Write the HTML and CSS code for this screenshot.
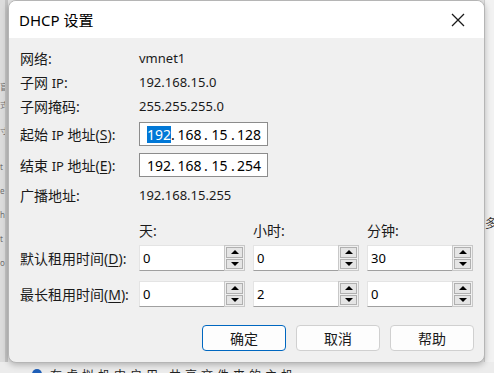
FILE: index.html
```html
<!doctype html>
<html>
<head>
<meta charset="utf-8">
<title>DHCP 设置</title>
<link rel="stylesheet" href="styles.css">
</head>
<body>
<div class="desk">
    <div class="left_strip">
        <span class="lc" style="top:82px">盲</span>
        <span class="lc" style="top:100px">式</span>
        <span class="lc" style="top:126px">寸</span>
        <span class="lc" style="top:162px">t</span>
        <span class="lc" style="top:186px">e</span>
        <span class="lc" style="top:210px">h</span>
        <span class="lc" style="top:234px">t</span>
        <span class="lc" style="top:258px">o</span>
    </div>
    <div class="right_strip">
        <span class="rc">多|</span>
    </div>
    <div class="bottom_strip">
        <span class="dot_blue"></span>
        <span class="btm_text">在虚拟机中启用 共享文件夹的主机</span>
    </div>

    <div class="dialog">
        <div class="titlebar">
            <span class="title">DHCP 设置</span>
            <svg class="close" width="14" height="14" viewBox="0 0 14 14">
                <path d="M1 1 L13 13 M13 1 L1 13" stroke="#1a1a1a" stroke-width="1.3" fill="none"/>
            </svg>
        </div>
        <div class="body">
            <div class="row r_info first">
                <span class="lbl">网络:</span><span class="val">vmnet1</span>
            </div>
            <div class="row r_info">
                <span class="lbl">子网 <span class="lat">IP</span>:</span><span class="val">192.168.15.0</span>
            </div>
            <div class="row r_info">
                <span class="lbl">子网掩码:</span><span class="val">255.255.255.0</span>
            </div>
            <div class="row r_ip r_start">
                <span class="lbl">起始 <span class="lat">IP</span> 地址(<u>S</u>):</span>
                <div class="ipbox">
                    <span class="oct o1"><span class="sel">192</span><span class="caret"></span></span><span class="dt">.</span><span class="oct">168</span><span class="dt">.</span><span class="oct o3">15</span><span class="dt">.</span><span class="oct">128</span>
                </div>
            </div>
            <div class="row r_ip r_end">
                <span class="lbl">结束 <span class="lat">IP</span> 地址(<u>E</u>):</span>
                <div class="ipbox">
                    <span class="oct o1">192</span><span class="dt">.</span><span class="oct">168</span><span class="dt">.</span><span class="oct o3">15</span><span class="dt">.</span><span class="oct">254</span>
                </div>
            </div>
            <div class="row r_bcast">
                <span class="lbl">广播地址:</span><span class="val">192.168.15.255</span>
            </div>
            <div class="row r_heads">
                <span class="lbl"></span>
                <span class="head">天:</span><span class="head">小时:</span><span class="head">分钟:</span>
            </div>
            <div class="row r_spin r_def">
                <span class="lbl">默认租用时间(<u>D</u>):</span>
                <div class="spin"><div class="sfield">0</div><div class="sbtns"><div class="sb"><span class="up"></span></div><div class="sb"><span class="down"></span></div></div></div>
                <div class="spin"><div class="sfield">0</div><div class="sbtns"><div class="sb"><span class="up"></span></div><div class="sb"><span class="down"></span></div></div></div>
                <div class="spin"><div class="sfield">30</div><div class="sbtns"><div class="sb"><span class="up"></span></div><div class="sb"><span class="down"></span></div></div></div>
            </div>
            <div class="row r_spin r_max">
                <span class="lbl">最长租用时间(<u>M</u>):</span>
                <div class="spin"><div class="sfield">0</div><div class="sbtns"><div class="sb"><span class="up"></span></div><div class="sb"><span class="down"></span></div></div></div>
                <div class="spin"><div class="sfield">2</div><div class="sbtns"><div class="sb"><span class="up"></span></div><div class="sb"><span class="down"></span></div></div></div>
                <div class="spin"><div class="sfield">0</div><div class="sbtns"><div class="sb"><span class="up"></span></div><div class="sb"><span class="down"></span></div></div></div>
            </div>
            <div class="buttons">
                <button class="btn btn_ok">确定</button>
                <button class="btn">取消</button>
                <button class="btn">帮助</button>
            </div>
        </div>
    </div>
</div>
</body>
</html>
```

FILE: styles.css
```css
* {margin: 0; padding: 0; box-sizing: border-box;}
html, body {
  width: 494px;
  height: 373px;
  overflow: hidden;
}
body {
  font-family: "Noto Sans", "Noto Sans CJK SC", sans-serif;
  font-size: 13px;
  color: #1a1a1a;
  background: #e6e6e6;
}
.desk {
  position: relative;
  width: 494px;
  height: 373px;
}
.left_strip {
  position: absolute;
  left: 0; top: 0;
  width: 8px;
  height: 373px;
  background: #dcdcdc;
  border-right: 3px solid #c4c4c4;
  overflow: hidden;
}
.lc {
  position: absolute;
  left: 0;
  font-size: 8px;
  line-height: 10px;
  color: #707070;
}
.right_strip {
  position: absolute;
  right: 0; top: 0;
  width: 10px;
  height: 373px;
  background: #f2f2f2;
  border-left: 1px solid #d0d0d0;
  overflow: hidden;
}
.rc {
  position: absolute;
  top: 214px;
  left: 0;
  font-size: 12px;
  color: #333;
  white-space: nowrap;
}
.bottom_strip {
  position: absolute;
  left: 0; top: 362px;
  width: 494px;
  height: 11px;
  background: #ececec;
  overflow: hidden;
}
.dot_blue {
  position: absolute;
  left: 32px; top: 7px;
  width: 10px; height: 10px;
  border-radius: 50%;
  background: #1f5fb8;
}
.btm_text {
  position: absolute;
  left: 50px; top: 4px;
  font-size: 12px;
  letter-spacing: 4px;
  color: #222;
  white-space: nowrap;
}
.dialog {
  position: absolute;
  left: 8px; top: 0;
  width: 477px;
  height: 363px;
  background: #f0f0f0;
  border: 1px solid #b5b5b5;
  border-radius: 8px;
  box-shadow: 0 2px 6px rgba(0,0,0,0.25);
  overflow: hidden;
  display: flex;
  flex-direction: column;
}
.titlebar {
  height: 37px;
  background: #fff;
  display: flex;
  align-items: center;
  justify-content: space-between;
  padding: 0 19px 0 10px;
  flex-shrink: 0;
}
.title {
  font-size: 15px;
  color: #000;
}
.close {display: block;}
.body {
  padding: 8px 0 0 11px;
}
.row {
  display: flex;
  align-items: center;
}
.lbl {
  width: 119px;
  flex-shrink: 0;
  white-space: nowrap;
  font-size: 14px;
}
.lbl u {text-underline-offset: 2px;}
.lat {font-size: 13px;}
.val {font-size: 13px;}
.r_info {height: 24px;}
.r_start {margin-top: 4px; height: 24px;}
.r_end {margin-top: 7px; height: 24px;}
.r_bcast {margin-top: 6px; height: 24px;}
.r_heads {margin-top: 11px; height: 24px;}
.r_def {margin-top: 3px; height: 26px;}
.r_max {margin-top: 10px; height: 26px;}
.ipbox {
  width: 129px;
  height: 24px;
  background: #fff;
  border: 1px solid #8c8c8c;
  display: flex;
  align-items: center;
  padding-left: 7px;
  font-size: 14px;
  color: #000;
}
.oct {display: inline-block; text-align: center;}
.o1 {width: 22px; display: inline-flex; align-items: center;}
.oct:nth-of-type(3) {width: 25px;}
.o3 {width: 19px;}
.oct:last-child {width: 24px;}
.dt {display: inline-block; width: 8px; text-align: center;}
.sel {
  background: #0078d7;
  color: #fff;
  line-height: 17px;
}
.caret {
  display: inline-block;
  width: 1px;
  height: 17px;
  background: #f08020;
}
.head {
  width: 114px;
  font-size: 14px;
}
.spin {
  width: 106px;
  height: 26px;
  margin-right: 8px;
  display: flex;
}
.sfield {
  width: 86px;
  height: 26px;
  background: #fff;
  border-top: 1px solid #e4e4e4;
  border-left: 1px solid #e4e4e4;
  border-bottom: 1px solid #a0a0a0;
  padding: 3px 0 0 3px;
  font-size: 13px;
  color: #000;
}
.sbtns {
  width: 21px;
  height: 26px;
  border: 1px solid #c8c8c8;
  background: #f0f0f0;
  padding: 1px;
  display: flex;
  flex-direction: column;
  gap: 1px;
}
.sb {
  flex: 1;
  background: #e5e5e5;
  border: 1px solid #b0b0b0;
  display: flex;
  align-items: center;
  justify-content: center;
}
.up {
  width: 0; height: 0;
  border-left: 4px solid transparent;
  border-right: 4px solid transparent;
  border-bottom: 4px solid #000;
}
.down {
  width: 0; height: 0;
  border-left: 4px solid transparent;
  border-right: 4px solid transparent;
  border-top: 4px solid #000;
}
.buttons {
  margin-top: 18px;
  display: flex;
  gap: 10px;
  padding-left: 182px;
}
.btn {
  width: 84px;
  height: 26px;
  background: #fdfdfd;
  border: 1px solid #d0d0d0;
  border-radius: 4px;
  font-family: "Noto Sans CJK SC", sans-serif;
  font-size: 14px;
  color: #1a1a1a;
}
.btn_ok {
  border: 1px solid #0067c0;
}
```
